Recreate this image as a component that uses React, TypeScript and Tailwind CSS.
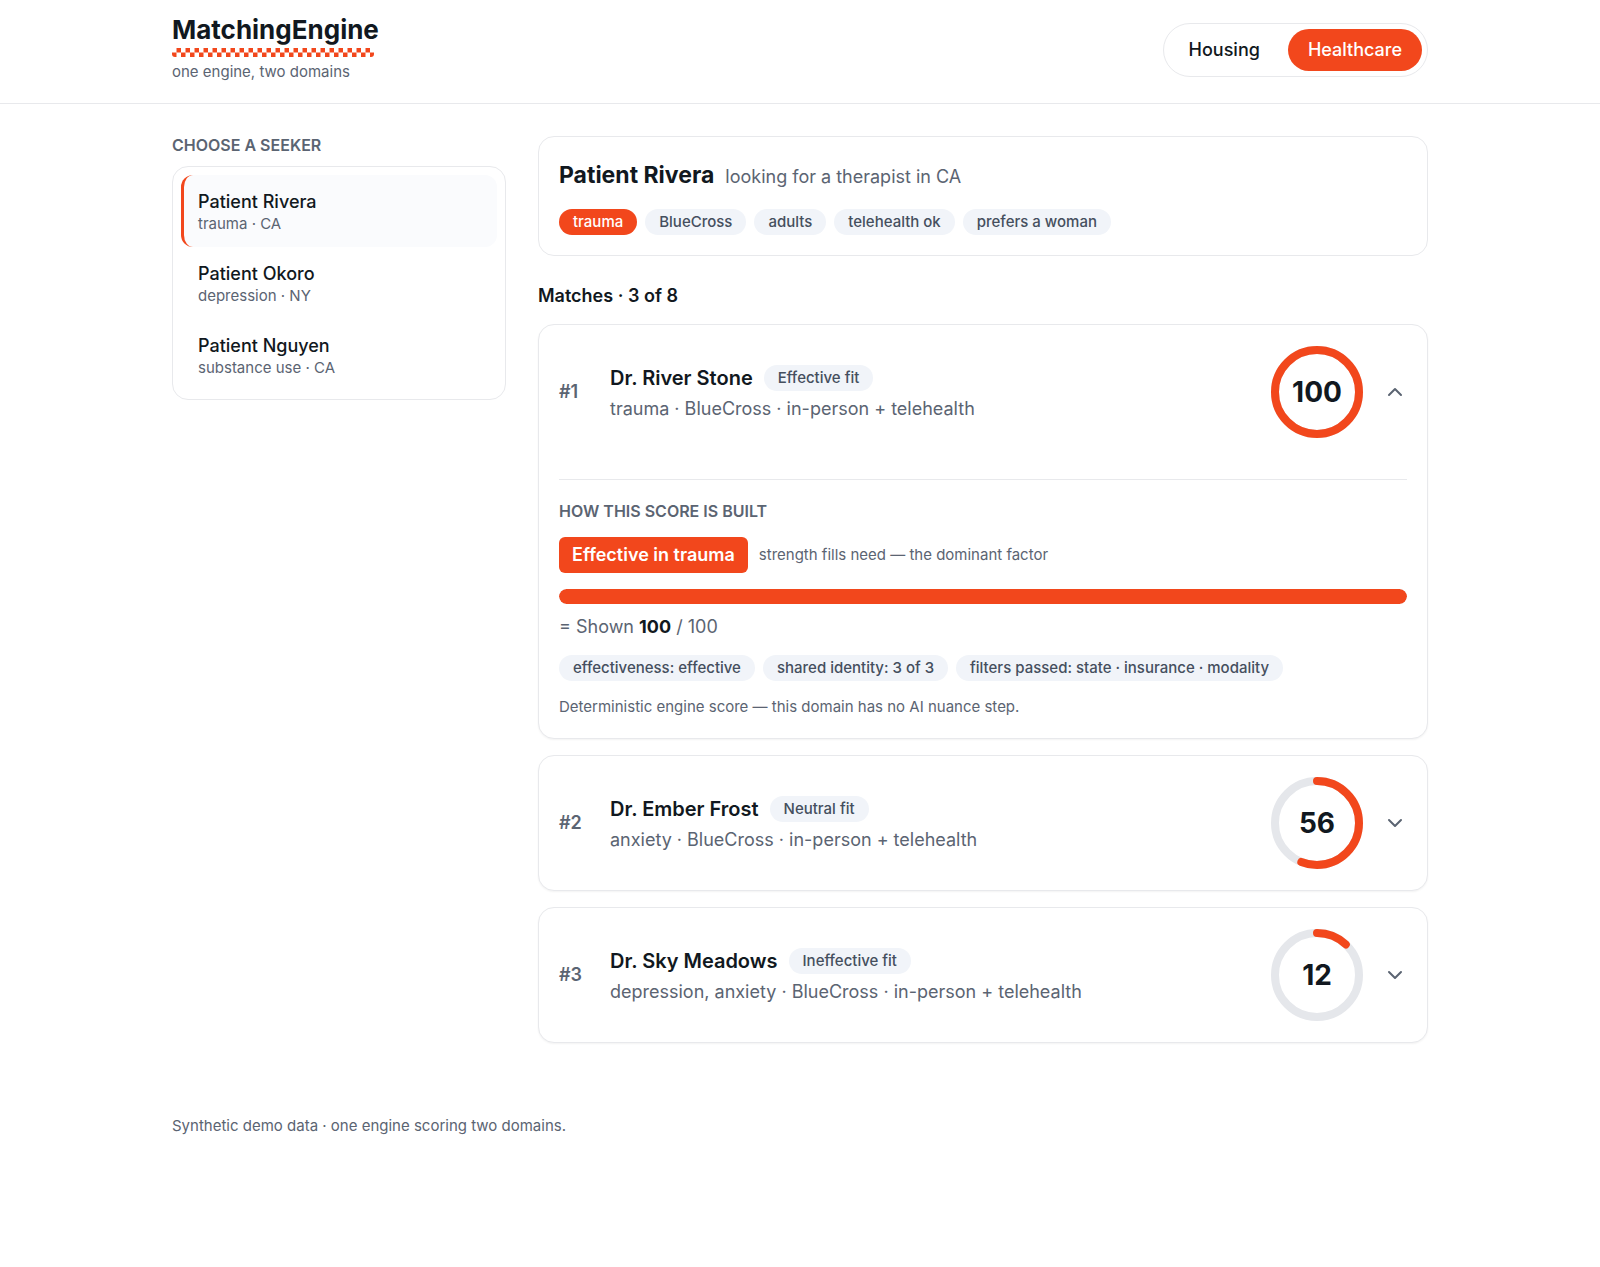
/**
 * App Component - MatchingEngine
 *
 * Seeker list on the left, ranked matches with their score breakdown on the right
 */

import { useState, type ReactNode } from 'react';
import { ChevronDown, ChevronUp } from 'lucide-react';

type Domain = 'Housing' | 'Healthcare';

interface Seeker {
  name: string;
  need: string;
  state: string;
}

interface Match {
  name: string;
  fit: string;
  details: string;
  score: number;
}

const domains: Domain[] = ['Housing', 'Healthcare'];

const seekers: Seeker[] = [
  { name: 'Patient Rivera', need: 'trauma', state: 'CA' },
  { name: 'Patient Okoro', need: 'depression', state: 'NY' },
  { name: 'Patient Nguyen', need: 'substance use', state: 'CA' },
];

const preferences = ['BlueCross', 'adults', 'telehealth ok', 'prefers a woman'];

const matches: Match[] = [
  { name: 'Dr. River Stone', fit: 'Effective', details: 'trauma · BlueCross · in-person + telehealth', score: 100 },
  { name: 'Dr. Ember Frost', fit: 'Neutral', details: 'anxiety · BlueCross · in-person + telehealth', score: 56 },
  { name: 'Dr. Sky Meadows', fit: 'Ineffective', details: 'depression, anxiety · BlueCross · in-person + telehealth', score: 12 },
];

/**
 * Checkered strip under the logo
 */
function Checkers() {
  return (
    <svg className="mt-[5px] block h-[9px] w-[202px] rounded-b-[3px]" aria-hidden="true">
      <defs>
        <pattern id="checkers" width="9" height="9" patternUnits="userSpaceOnUse">
          <rect x="4.5" y="0" width="4.5" height="4.5" fill="#f2471c" />
          <rect x="0" y="4.5" width="4.5" height="4.5" fill="#f2471c" />
        </pattern>
      </defs>
      <rect width="100%" height="9" fill="url(#checkers)" />
    </svg>
  );
}

/**
 * Small rounded label
 */
function Pill({ children, active = false }: { children: ReactNode; active?: boolean }) {
  return (
    <span
      className={`rounded-full px-[14px] text-[15px] leading-[26px] font-medium whitespace-nowrap ${
        active ? 'bg-[#f2471c] text-white' : 'bg-[#f1f4f9] text-[#454f5e]'
      }`}
    >
      {children}
    </span>
  );
}

/**
 * Circular score gauge
 */
function ScoreRing({ score }: { score: number }) {
  const radius = 42;
  const length = 2 * Math.PI * radius;

  return (
    <div className="grid shrink-0 place-items-center">
      <svg className="col-start-1 row-start-1 size-[92px] -rotate-90" viewBox="0 0 92 92" fill="none" aria-hidden="true">
        <circle cx="46" cy="46" r={radius} stroke="#e5e7eb" strokeWidth="8" />
        <circle
          cx="46"
          cy="46"
          r={radius}
          stroke="#f2471c"
          strokeWidth="8"
          strokeLinecap="round"
          strokeDasharray={`${(length * score) / 100} ${length}`}
        />
      </svg>
      <span className="col-start-1 row-start-1 text-[28px] leading-8 font-bold">{score}</span>
    </div>
  );
}

/**
 * Score breakdown shown under an open match
 */
function Breakdown({ match, need }: { match: Match; need: string }) {
  return (
    <div className="mx-5 mb-5 border-t border-[#e8e9ec] pt-5">
      <h4 className="text-[16px] leading-[22px] font-semibold text-[#5b6472] uppercase">How this score is built</h4>
      <div className="mt-[15px] flex flex-wrap items-center gap-[11px]">
        <span className="rounded-md bg-[#f2471c] px-[13px] text-[18px] leading-9 font-semibold text-white">
          {match.fit} in {need}
        </span>
        <span className="text-[15px] leading-[22px] text-[#5b6472]">strength fills need — the dominant factor</span>
      </div>
      <div className="mt-4 h-[15px] overflow-hidden rounded-full bg-[#e5e7eb]">
        <div className="h-full rounded-full bg-[#f2471c]" style={{ width: `${match.score}%` }} />
      </div>
      <p className="mt-[10px] text-[18px] leading-[26px] text-[#5b6472]">
        = Shown <strong className="font-bold text-[#111820]">{match.score}</strong> / 100
      </p>
      <div className="mt-[15px] flex flex-wrap gap-2">
        <Pill>effectiveness: {match.fit.toLowerCase()}</Pill>
        <Pill>shared identity: 3 of 3</Pill>
        <Pill>filters passed: state · insurance · modality</Pill>
      </div>
      <p className="mt-[15px] text-[15px] leading-[22px] text-[#5b6472]">
        Deterministic engine score — this domain has no AI nuance step.
      </p>
    </div>
  );
}

interface MatchCardProps {
  match: Match;
  rank: number;
  need: string;
  open: boolean;
  onToggle: () => void;
}

function MatchCard({ match, rank, need, open, onToggle }: MatchCardProps) {
  const Chevron = open ? ChevronUp : ChevronDown;

  return (
    <li className="rounded-2xl border border-[#e8e9ec] bg-white shadow-xs">
      <button
        type="button"
        aria-expanded={open}
        onClick={onToggle}
        className="flex w-full items-center px-5 py-[21px] text-left"
      >
        <span className="w-[51px] shrink-0 text-[18px] leading-[26px] font-semibold text-[#5b6472]">#{rank}</span>
        <span className="min-w-0 flex-1 pt-[2px]">
          <span className="flex flex-wrap items-center gap-[11px]">
            <span className="text-[20px] leading-[26px] font-semibold">{match.name}</span>
            <Pill>{match.fit} fit</Pill>
          </span>
          <span className="mt-[5px] block text-[18px] leading-[26px] text-[#5b6472]">{match.details}</span>
        </span>
        <ScoreRing score={match.score} />
        <Chevron className="ml-5 size-6 shrink-0 text-[#5b6472]" strokeWidth={2} aria-hidden="true" />
      </button>
      {open && (
        <div className="pt-5">
          <Breakdown match={match} need={need} />
        </div>
      )}
    </li>
  );
}

/**
 * Main App Component
 */
function App() {
  const [domain, setDomain] = useState<Domain>('Healthcare');
  const [selected, setSelected] = useState(0);
  const [openMatch, setOpenMatch] = useState<number | null>(0);

  const seeker = seekers[selected];

  return (
    <div className="min-h-screen bg-white font-['Inter',sans-serif] text-[#111820]">
      <header className="border-b border-[#e8e9ec]">
        <div className="mx-auto flex max-w-[1320px] items-center justify-between px-8 pt-[17px] pb-5">
          <div>
            <h1 className="text-[26px] leading-[26px] font-bold">MatchingEngine</h1>
            <Checkers />
            <p className="mt-1 text-[15px] leading-[22px] text-[#5b6472]">one engine, two domains</p>
          </div>
          <nav aria-label="Domain" className="flex gap-2 rounded-full border border-[#e8e9ec] p-[5px]">
            {domains.map(name => (
              <button
                key={name}
                type="button"
                aria-pressed={domain === name}
                onClick={() => setDomain(name)}
                className={`rounded-full px-5 text-[18px] leading-[42px] font-medium ${
                  domain === name ? 'bg-[#f2471c] text-white' : ''
                }`}
              >
                {name}
              </button>
            ))}
          </nav>
        </div>
      </header>

      <main className="mx-auto grid max-w-[1320px] grid-cols-[334px_minmax(0,1fr)] items-start gap-8 px-8 pt-8">
        {/* Seekers */}
        <section>
          <h2 className="text-[16px] leading-[18px] font-semibold text-[#5b6472] uppercase">Choose a seeker</h2>
          <ul className="mt-3 rounded-2xl border border-[#e8e9ec] p-2">
            {seekers.map((item, index) => (
              <li key={item.name}>
                <button
                  type="button"
                  aria-pressed={selected === index}
                  onClick={() => setSelected(index)}
                  className={`block w-full rounded-xl border-l-3 px-[14px] pt-[15px] pb-[13px] text-left ${
                    selected === index ? 'border-[#f2471c] bg-[#fafbfd]' : 'border-transparent'
                  }`}
                >
                  <span className="block text-[18px] leading-6 font-medium">{item.name}</span>
                  <span className="block text-[15px] leading-5 text-[#5b6472]">
                    {item.need} · {item.state}
                  </span>
                </button>
              </li>
            ))}
          </ul>
        </section>

        <div>
          {/* Selected seeker */}
          <section className="rounded-2xl border border-[#e8e9ec] p-5">
            <div className="flex flex-wrap items-baseline gap-[11px]">
              <h2 className="text-[23px] leading-9 font-bold">{seeker.name}</h2>
              <p className="text-[18px] leading-[26px] text-[#5b6472]">looking for a therapist in {seeker.state}</p>
            </div>
            <div className="mt-4 flex flex-wrap gap-2">
              <Pill active>{seeker.need}</Pill>
              {preferences.map(preference => (
                <Pill key={preference}>{preference}</Pill>
              ))}
            </div>
          </section>

          {/* Ranked matches */}
          <h3 className="mt-[27px] text-[18px] leading-[26px] font-semibold">Matches · {matches.length} of 8</h3>
          <ul className="mt-[15px] flex flex-col gap-4">
            {matches.map((match, index) => (
              <MatchCard
                key={match.name}
                match={match}
                rank={index + 1}
                need={seeker.need}
                open={openMatch === index}
                onToggle={() => setOpenMatch(openMatch === index ? null : index)}
              />
            ))}
          </ul>
        </div>
      </main>

      <footer className="mx-auto max-w-[1320px] px-8 pt-[72px] pb-8 text-[15px] leading-[22px] text-[#5b6472]">
        Synthetic demo data · one engine scoring two domains.
      </footer>
    </div>
  );
}

export default App;
